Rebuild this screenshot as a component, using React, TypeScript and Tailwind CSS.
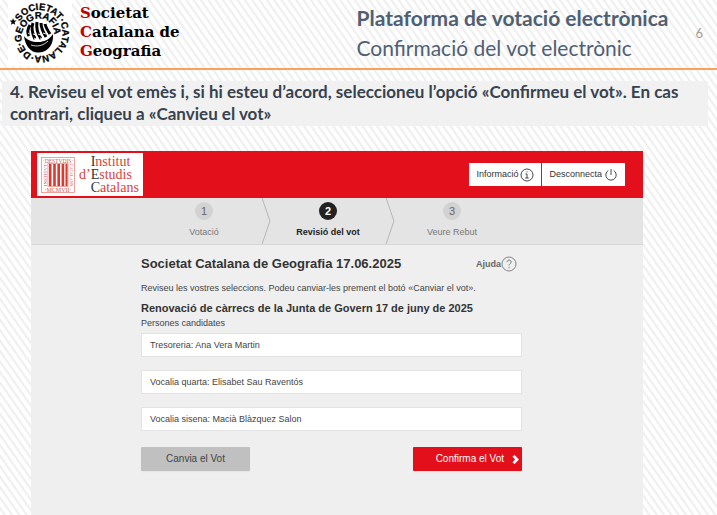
import type { ReactNode } from "react";

const candidates = [
  "Tresoreria: Ana Vera Martin",
  "Vocalia quarta: Elisabet Sau Raventós",
  "Vocalia sisena: Macià Blàzquez Salon",
];

/* Spiral baseline that the lettering of the seal runs along, winding inwards. */
function spiralPath(): string {
  const points: string[] = [];
  for (let deg = -150; deg <= 400; deg += 5) {
    const inward = Math.min(1, Math.max(0, (deg - 110) / 110));
    const radius = 23 - inward * 8.5;
    const a = (deg * Math.PI) / 180;
    points.push(`${(39.5 + radius * Math.cos(a)).toFixed(2)} ${(33 + radius * Math.sin(a)).toFixed(2)}`);
  }
  return "M" + points.join("L");
}

function SocietySeal() {
  return (
    <svg viewBox="8 0 64 66" className="h-[66px] w-16 bg-white" role="img" aria-label="Segell">
      <defs>
        <path id="seal-spiral" d={spiralPath()} />
      </defs>
      <text fontFamily="Liberation Sans, sans-serif" fontSize="9.500" fontWeight="700" stroke="#000" strokeWidth="0.3">
        <textPath href="#seal-spiral">SOCIETAT·CATALANA·DE·GEOGRAFIA</textPath>
      </text>
      <path d="M13 18l1 2.400 2.600.1-2 1.700.7 2.600-2.200-1.400-2.200 1.400.7-2.600-2-1.700 2.600-.1z" />
      <path d="M24 36c3 4 8 6 14 6 6 0 11-2 15-8 1 9-4 18-14 18.500C30 53 25 45 24 36z" />
      <g fill="none" stroke="#000" strokeWidth="3">
        <path d="M29 36c-2-4-1-8 1-11" />
        <path d="M35 39c-3-6-4-11-2-16" />
        <path d="M41 39c-4-6-5-11-4-17" />
        <path d="M46 37c-3-5-5-10-5-14" />
        <path d="M50 34c-2-3-4-6-5-10" />
      </g>
      <path d="M28 33l3 2M33 34l3 1M38 34l3 1M43 33l3 1M34 38l2 1M40 38l3 1" stroke="#fff" strokeWidth="0.9" />
      <path d="M31 45c6 2 12 1 17-4" stroke="#fff" strokeWidth="0.8" fill="none" />
    </svg>
  );
}

function InstituteEmblem() {
  return (
    <svg viewBox="0 0 34 36" className="h-9 w-[34px] shrink-0" aria-hidden="true">
      <g fill="none" stroke="#e88d87" strokeWidth="0.8">
        <rect x="0.500" y="0.500" width="33" height="35" />
        <rect x="7" y="6.500" width="20" height="23" />
      </g>
      <path d="M8 7h2.500v22H8zM12.200 7h2.600v22h-2.600zM16.400 7h2.600v22h-2.600zM20.600 7h2.600v22h-2.600zM24.500 7h2v22h-2z" fill="#dd3730" />
      <g fill="#cf5a52" fontFamily="Liberation Serif, serif" fontSize="6" textAnchor="middle">
        <text x="17" y="5.500" fontSize="5.500">·DESTVDIS·</text>
        <text x="17" y="34.500">·MCMVII·</text>
        <text transform="translate(5.500 18) rotate(-90)" fontSize="5">INSTITVT</text>
        <text transform="translate(28.500 18) rotate(90)" fontSize="4.500">CATALANS</text>
      </g>
    </svg>
  );
}

function InfoIcon() {
  return (
    <svg viewBox="0 0 14 14" className="h-[14px] w-[14px]" fill="none" stroke="#333" strokeWidth="0.9" aria-hidden="true">
      <circle cx="7" cy="7" r="6" />
      <path d="M5.500 6H7v4M5.300 10h3.400M6.500 3.900h1" />
    </svg>
  );
}

function PowerIcon() {
  return (
    <svg viewBox="0 0 14 14" className="h-[14px] w-[14px]" fill="none" stroke="#333" strokeWidth="0.9" aria-hidden="true">
      <path d="M7 1v6M4.300 2.500a5.200 5.200 0 1 0 5.400 0" />
    </svg>
  );
}

function HelpIcon() {
  return (
    <svg viewBox="0 0 16 16" className="h-4 w-4" fill="none" stroke="#777" strokeWidth="0.9" aria-hidden="true">
      <circle cx="8" cy="8" r="7" />
      <path d="M6 6.200c0-2.700 4.200-2.700 4.200-.2C10.200 7.600 8 7.700 8 9.600M8 11v1.200" strokeWidth="1" />
    </svg>
  );
}

function StepArrow() {
  return (
    <svg viewBox="0 0 10 47" className="h-full w-2.5 shrink-0" fill="none" stroke="#b5b5b5" aria-hidden="true">
      <path d="M1 0l8 23.500-8 23.500" />
    </svg>
  );
}

function Step({ number, current, children }: { number: number; current?: boolean; children: ReactNode }) {
  return (
    <li
      aria-current={current ? "step" : undefined}
      className={`flex flex-1 flex-col items-center gap-1.5 pt-1 text-[9px] leading-3 ${current ? "font-bold text-[#222]" : "text-[#777]"}`}
    >
      <span
        className={`flex h-[18px] w-[18px] items-center justify-center rounded-full text-[11px] ${current ? "bg-[#222] text-white" : "bg-[#d2d2d2] text-[#666]"}`}
      >
        {number}
      </span>
      {children}
    </li>
  );
}

export default function App() {
  return (
    <div className="flex min-h-screen flex-col bg-white bg-[repeating-linear-gradient(55deg,#fff_0px,#fff_2px,#ededed_4px,#fff_6px)] font-['Liberation_Sans',Arial,sans-serif]">
      <header className="flex h-[70px] items-start border-b-2 border-b-[#f9a25b]">
        <div className="flex flex-1 gap-2 pl-2">
          <SocietySeal />
          <p className="pt-1 font-['DejaVu_Serif',serif] text-[15px] leading-[19px] font-bold whitespace-nowrap text-black">
            <span className="text-[#c00000]">S</span>ocietat
            <br />
            <span className="text-[#c00000]">C</span>atalana de
            <br />
            <span className="text-[#c00000]">G</span>eografia
          </p>
        </div>
        <div className="w-[339px] pt-[3px] font-['Lato',sans-serif] text-[21px] leading-[30px] text-[#4f6072]">
          <h1 className="font-bold">Plataforma de votació electrònica</h1>
          <p>Confirmació del vot electrònic</p>
        </div>
        <span className="pt-[23px] pr-[14px] font-['Lato',sans-serif] text-[13px] leading-5 text-[#a89c94]">6</span>
      </header>

      <p className="mt-[11px] mr-[9px] ml-0.5 bg-[#f1f1f1] pr-6 pb-px pl-2 font-['Lato',sans-serif] text-[17px] leading-[22px] font-bold text-[#37424e]">
        4. Reviseu el vot emès i, si hi esteu d’acord, seleccioneu l’opció «Confirmeu el vot». En cas contrari, cliqueu a
        «Canvieu el vot»
      </p>

      <main className="mt-[25px] mr-[74px] ml-[31px] flex flex-1 flex-col bg-[#efefef]">
        <div className="flex h-[47px] items-center justify-between bg-[#e30f1b] pr-[18px] pl-1.5">
          <div className="flex h-[43px] items-center gap-1 bg-white px-1">
            <InstituteEmblem />
            <p className="grid grid-cols-[auto_auto] font-['Liberation_Serif',serif] text-[14px] leading-[13px] text-[#d8433c]">
              <span />
              <span><span className="text-[#333]">I</span>nstitut</span>
              <span>d’</span>
              <span><span className="text-[#333]">E</span>studis</span>
              <span />
              <span><span className="text-[#333]">C</span>atalans</span>
            </p>
          </div>
          <div className="flex gap-px text-[9px] text-[#333]">
            <button type="button" className="flex h-[23px] items-center gap-0.5 bg-white px-[7px]">
              Informació <InfoIcon />
            </button>
            <button type="button" className="flex h-[23px] items-center gap-0.5 bg-white px-[7px]">
              Desconnecta <PowerIcon />
            </button>
          </div>
        </div>

        <ol className="flex h-[47px] border-b border-[#d8d8d8] bg-[#e4e4e4] pr-[134px] pl-[116px]">
          <Step number={1}>Votació</Step>
          <StepArrow />
          <Step number={2} current>Revisió del vot</Step>
          <StepArrow />
          <Step number={3}>Veure Rebut</Step>
        </ol>

        <div className="pt-2.5 pr-[121px] pl-[110px] text-[9px] leading-3 text-[#444]">
          <div className="flex items-center justify-between pr-[5px]">
            <h2 className="text-[13px] leading-[18px] font-bold text-[#333]">Societat Catalana de Geografia 17.06.2025</h2>
            <a href="#ajuda" className="flex items-center font-bold text-[#666]">
              Ajuda <HelpIcon />
            </a>
          </div>
          <p className="mt-[9px]">Reviseu les vostres seleccions. Podeu canviar-les prement el botó «Canviar el vot».</p>
          <h3 className="mt-1.5 text-[11px] leading-4 font-bold text-[#333]">
            Renovació de càrrecs de la Junta de Govern 17 de juny de 2025
          </h3>
          <p className="mt-px">Persones candidates</p>
          <ul className="mt-1 flex flex-col gap-[13px]">
            {candidates.map((name) => (
              <li key={name} className="flex h-6 items-center border border-[#e3e3e3] bg-white px-2">
                {name}
              </li>
            ))}
          </ul>
          <div className="mt-4 flex justify-between text-[10px]">
            <button type="button" className="h-6 w-[109px] rounded-[1px] bg-[#c0c0c0] text-[#444] shadow-xs">
              Canvia el Vot
            </button>
            <button type="button" className="flex h-6 w-[109px] items-center justify-end gap-2 rounded-[1px] bg-[#e30f1b] pr-[3px] text-white shadow-xs">
              Confirma el Vot
              <svg viewBox="0 0 7 9" className="h-[9px] w-[7px]" fill="none" stroke="#fff" strokeWidth="2.800" aria-hidden="true">
                <path d="M1.500 0.800L5 4.500 1.500 8.200" />
              </svg>
            </button>
          </div>
        </div>
      </main>
    </div>
  );
}
